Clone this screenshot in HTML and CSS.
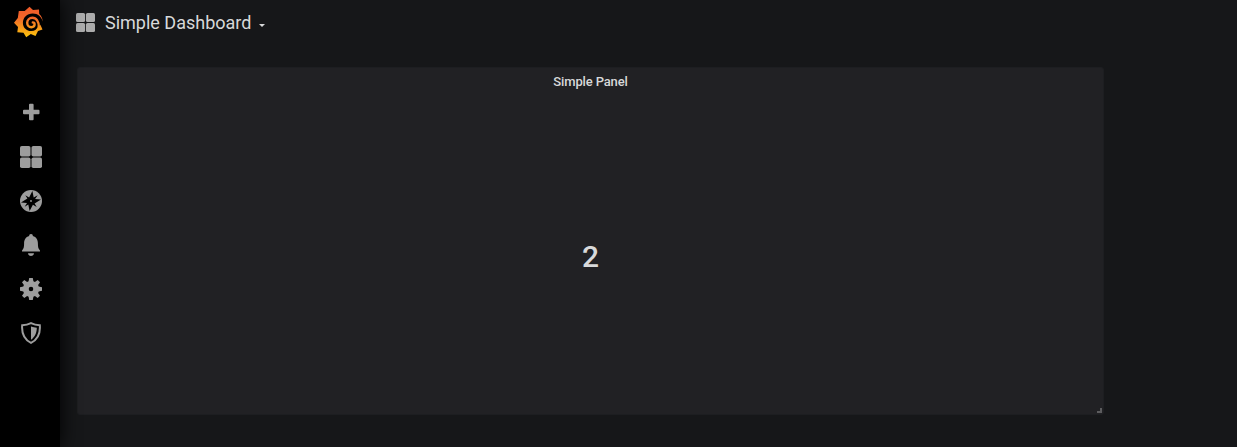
FILE: index.html
```html
<!DOCTYPE html>
<html lang="en">
<head>
<meta charset="utf-8">
<title>Simple Dashboard</title>
<link rel="stylesheet" href="styles.css">
</head>
<body>
<div class="app">
  <nav class="sidemenu">
    <a class="logo" aria-label="Home">
      <svg width="60" height="44" viewBox="0 0 60 44">
        <defs><linearGradient id="flame" gradientUnits="userSpaceOnUse" x1="0" y1="7" x2="0" y2="37"><stop offset="0" stop-color="#f05a28"/><stop offset=".35" stop-color="#f2652a"/><stop offset="1" stop-color="#fcc40c"/></linearGradient></defs>
        <path fill="url(#flame)" d="M18.800 11L24.700 11L29.500 6.800L33 10L39 9.500L39.200 14Q42.500 17 42.500 21L40.300 24.500L42.500 29.500L38 31L35.500 36L30.800 34L26.200 37.200L23.500 32.800L17.300 32.300L18 27L14 22.800L17.800 18Z"/>
        <path d="M43 22C41.500 17 38 13.600 32.700 13.600C27 13.600 22.900 17.800 22.900 22.900C22.900 27.600 26.700 31 31.200 31C34.800 31 37.200 29 38.200 26L40.200 25.200Z"/>
        <path fill="none" stroke="url(#flame)" stroke-width="2.400" stroke-linecap="round" d="M38.800 27C39 21.500 36.400 17.800 32.300 17.800C29.400 17.800 27.200 20 27.200 22.800C27.200 25.400 29 27.200 31.300 27.200C33.300 27.200 34.600 25.800 34.600 24.300C34.600 23.100 33.700 22.400 32.800 22.400"/>
      </svg>
    </a>
    <div class="menu">
      <a class="item" aria-label="Create"><svg width="22" height="22" viewBox="0 0 22 22"><path d="M10 1.700h2.600a1 1 0 0 1 1 1v5h4.900a1 1 0 0 1 1 1v2.600a1 1 0 0 1-1 1h-4.900v4.900a1 1 0 0 1-1 1H10a1 1 0 0 1-1-1v-4.900H4a1 1 0 0 1-1-1V8.700a1 1 0 0 1 1-1h5v-5a1 1 0 0 1 1-1z"/></svg></a>
      <a class="item" aria-label="Dashboards"><svg width="22" height="22" viewBox="0 0 22 22"><rect width="10.500" height="10.500" rx="1.800"/><rect x="11.500" width="10.500" height="10.500" rx="1.800"/><rect y="11.500" width="10.500" height="10.500" rx="1.800"/><rect x="11.500" y="11.500" width="10.500" height="10.500" rx="1.800"/></svg></a>
      <a class="item" aria-label="Explore"><svg width="22" height="22" viewBox="0 0 22 22"><circle cx="11" cy="11" r="11"/><path class="cutout" d="M12.400 1L13.700 7.400L17.700 5.200L15.100 9L21 9.600L14.600 13.400L16.700 17L12.900 14.700L9.600 21L8.300 14.500L4.700 16.700L7 12.900L1 12.400L7.400 8.600L5.300 5.300L9.100 7.400Z"/><circle cx="11" cy="11" r=".9"/></svg></a>
      <a class="item" aria-label="Alerting"><svg width="22" height="22" viewBox="0 0 22 22"><path d="M11 0a1.800 1.800 0 0 1 1.800 2.100C16.300 3 17.900 6 17.900 9.500c0 3.200.3 4.500 1.400 6.100l.7 1.600H2l.7-1.600C3.800 14 4.100 12.700 4.100 9.500 4.100 6 5.700 3 9.200 2.100A1.800 1.800 0 0 1 11 0zM2 16.300h18v1.300H2zM8 19.200h6C13.800 21 12.600 22 11 22s-2.800-1-3-2.800z"/></svg></a>
      <a class="item" aria-label="Configuration"><svg width="22" height="22" viewBox="0 0 22 22"><path fill-rule="evenodd" d="M9.200 0h3.600l.6 3.300 1.500.6 2.800-1.900L20 4.300l-1.900 2.800.6 1.500 3.300.6v3.600l-3.300.6-.6 1.500 1.900 2.800-2.300 2.300-2.800-1.900-1.500.6-.6 3.300H9.200l-.6-3.300-1.500-.6L4.300 20 2 17.700l1.900-2.800-.6-1.500-3.300-.6V9.200l3.300-.6.6-1.500L2 4.300 4.300 2l2.800 1.900 1.500-.6zM11 8.700a2.300 2.300 0 1 0 0 4.600 2.300 2.300 0 0 0 0-4.600z"/></svg></a>
      <a class="item" aria-label="Server Admin"><svg width="22" height="22" viewBox="0 0 22 22"><path class="outline" d="M11 1.100C8 2.600 5 3.100 2.200 3.200C1.500 11 4.500 17.600 11 20.900C17.500 17.600 20.500 11 19.800 3.200C17 3.100 14 2.600 11 1.100Z"/><path d="M11 4.500C12.800 5.200 14.800 5.600 16.800 5.700C16.800 10.500 15 14.900 11 17.700Z"/></svg></a>
    </div>
  </nav>
  <main class="main">
    <header class="navbar">
      <svg class="grid-icon" width="19" height="19" viewBox="0 0 22 22"><rect width="10.500" height="10.500" rx="1.800"/><rect x="11.500" width="10.500" height="10.500" rx="1.800"/><rect y="11.500" width="10.500" height="10.500" rx="1.800"/><rect x="11.500" y="11.500" width="10.500" height="10.500" rx="1.800"/></svg>
      <span class="title">Simple Dashboard</span>
      <svg class="caret" width="6" height="3" viewBox="0 0 6 3"><path d="M0 0h6L3 3z"/></svg>
    </header>
    <section class="panel">
      <h2 class="panel-title">Simple Panel</h2>
      <div class="value">2</div>
      <span class="resize"></span>
    </section>
  </main>
</div>
</body>
</html>
```
FILE: styles.css
```css
* { box-sizing: border-box; }
body { margin: 0; background: #161719; color: #d8d9da; font-family: Roboto, "Liberation Sans", sans-serif; overflow: hidden; }
.app { display: flex; height: 447px; }
.sidemenu { position: relative; z-index: 1; width: 60px; flex: none; background: #000; box-shadow: 0 0 20px #000; }
.logo { display: block; height: 44px; }
.logo svg { display: block; }
.menu { display: flex; flex-direction: column; padding-top: 47px; }
.item { display: flex; align-items: center; justify-content: center; height: 44px; padding-left: 2px; }
.item svg { fill: #9d9d9d; }
.item .cutout { fill: #000; }
.item .outline { fill: none; stroke: #9d9d9d; stroke-width: 2; }
.main { flex: 1; padding-left: 17px; }
.navbar { display: flex; align-items: center; height: 44px; margin-left: -1px; }
.grid-icon { fill: #acacac; margin-right: 10px; }
.title { font-size: 18px; line-height: 24px; padding-top: 2px; }
.caret { fill: #d8d9da; margin: 7px 0 0 8px; }
.panel { position: relative; display: flex; flex-direction: column; width: 1027px; height: 348px; margin-top: 23px; background: #212124; border: 1px solid #1d1e21; border-radius: 3px; }
.panel-title { margin: 0; height: 27px; font-size: 13px; font-weight: 500; line-height: 27px; letter-spacing: -0.15px; text-align: center; }
.value { flex: 1; display: flex; align-items: center; justify-content: center; padding-top: 4px; font-size: 30px; font-weight: 500; }
.resize { position: absolute; right: 1px; bottom: 1px; width: 5px; height: 5px; border-right: 2px solid #5c5c5e; border-bottom: 2px solid #5c5c5e; }
```
